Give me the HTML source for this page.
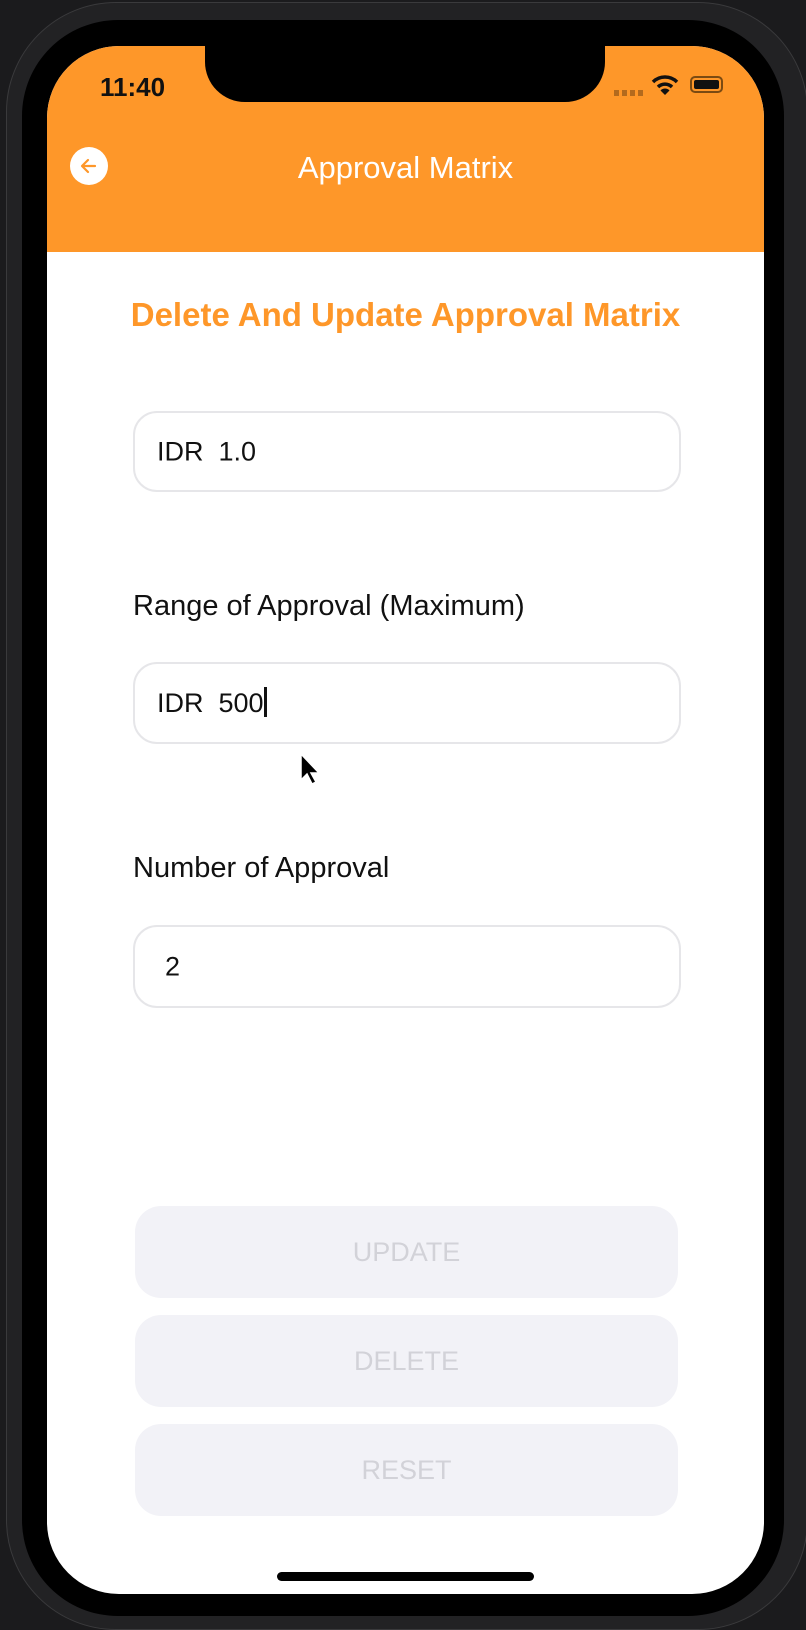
<!DOCTYPE html>
<html><head><meta charset="utf-8"><style>
body{margin:0;width:806px;height:1628px;background:#1b1b1d;position:relative;overflow:hidden;font-family:"Liberation Sans",sans-serif}
.frame{position:absolute;left:6px;top:2px;width:800px;height:1626px;border-radius:110px;background:#222224;border:1px solid #3a3a3c}
.bezel{position:absolute;left:22px;top:20px;width:762px;height:1596px;border-radius:96px;background:#000}
.screen{position:absolute;left:47px;top:46px;width:717px;height:1548px;border-radius:72px;background:#fff;overflow:hidden}
.orange{position:absolute;left:0;top:0;width:717px;height:206px;background:#fe9729}
.notch{position:absolute;left:158px;top:-2px;width:400px;height:58px;background:#000;border-radius:0 0 40px 40px}
.abs{position:absolute}
.field{position:absolute;left:86px;width:548px;border:2px solid #e6e6e9;border-radius:24px;box-sizing:border-box;font-size:27px;color:#111}
.field span{position:absolute;left:22px;top:50%;transform:translateY(-50%)}
.lbl{position:absolute;left:86px;font-size:29px;color:#111}
.btn{position:absolute;left:88px;width:543px;height:92px;background:#f2f2f7;border-radius:26px;color:#d2d2d8;font-size:27px;text-align:center;line-height:92px}
</style></head><body>
<div class="frame"></div>
<div class="bezel"></div>
<div class="screen">
 <div class="orange"></div>
 <div class="notch"></div>
 <div class="abs" style="left:53px;top:26px;font-size:26px;font-weight:bold;color:#111">11:40</div>
 <div class="abs" style="left:567px;top:44px;width:30px;height:6px;background:repeating-linear-gradient(90deg,#b36a1d 0 5px,transparent 5px 8px)"></div>
 <svg class="abs" style="left:604px;top:28px" width="28" height="22" viewBox="0 0 28 22"><path d="M2 8 A17 17 0 0 1 26 8" stroke="#111" stroke-width="3.5" fill="none"/><path d="M7 13 A10 10 0 0 1 21 13" stroke="#111" stroke-width="3.5" fill="none"/><path d="M14 21 L9.5 16.5 A6 6 0 0 1 18.5 16.5Z" fill="#111"/></svg>
 <div class="abs" style="left:643px;top:30px;width:33px;height:17px;border:2px solid #7a4a12;border-radius:5px;box-sizing:border-box;padding:2px"><div style="width:100%;height:100%;background:#111;border-radius:2px"></div></div>
 <div class="abs" style="left:23px;top:101px;width:38px;height:38px;border-radius:50%;background:#fff"></div>
 <svg class="abs" style="left:31px;top:109px" width="22" height="22" viewBox="0 0 22 22"><path d="M17 11H5M10 5L4 11l6 6" stroke="#fe9729" stroke-width="2.2" fill="none" stroke-linecap="round" stroke-linejoin="round"/></svg>
 <div class="abs" style="left:0;width:717px;top:104px;text-align:center;font-size:31px;color:#fff">Approval Matrix</div>
 <div class="abs" style="left:0;width:717px;top:250px;text-align:center;font-size:33px;font-weight:bold;color:#fe9729">Delete And Update Approval Matrix</div>
 <div class="field" style="top:365px;height:81px"><span>IDR&nbsp;&nbsp;1.0</span></div>
 <div class="lbl" style="top:544px">Range of Approval (Maximum)</div>
 <div class="field" style="top:616px;height:82px"><span>IDR&nbsp;&nbsp;500<span style="position:static;display:inline-block;width:3px;height:30px;background:#111;vertical-align:-5px;transform:none"></span></span></div>
 <svg class="abs" style="left:252px;top:706px" width="22" height="34" viewBox="0 0 22 34"><path d="M2 2V28L8 22L13 32L17 30L12 21H20Z" fill="#000" stroke="#fff" stroke-width="1.5"/></svg>
 <div class="lbl" style="top:806px">Number of Approval</div>
 <div class="field" style="top:879px;height:83px"><span style="left:30px">2</span></div>
 <div class="btn" style="top:1160px">UPDATE</div>
 <div class="btn" style="top:1269px">DELETE</div>
 <div class="btn" style="top:1378px">RESET</div>
 <div class="abs" style="left:230px;top:1526px;width:257px;height:9px;border-radius:5px;background:#000"></div>
</div>
</body></html>
